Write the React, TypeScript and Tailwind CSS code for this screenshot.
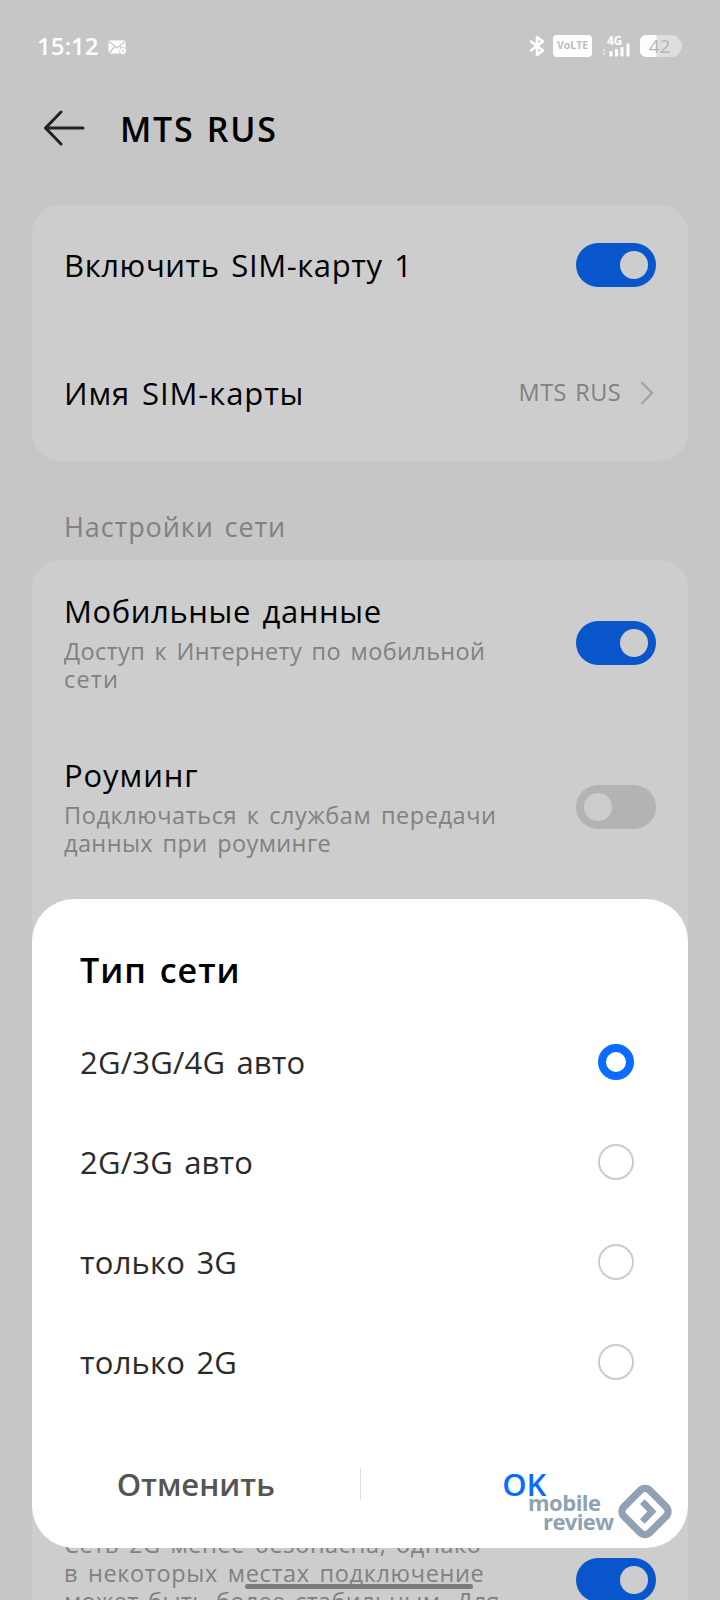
import React from 'react';
import clsx from 'clsx';

interface NetworkOption {
  id: string;
  label: string;
}

const networkOptions: NetworkOption[] = [
  { id: 'auto-4g', label: '2G/3G/4G авто' },
  { id: 'auto-3g', label: '2G/3G авто' },
  { id: 'only-3g', label: 'только 3G' },
  { id: 'only-2g', label: 'только 2G' },
];

const StatusBar = () => (
  <div className="flex h-[92px] items-center justify-between pl-[37px] pr-[38px] text-white">
    <div className="flex items-center gap-[10px]">
      <span className="text-[24px] leading-8 font-semibold">15:12</span>
      <svg width="19" height="15" viewBox="0 0 19 15" className="mt-[3px]">
        <rect x="0.5" y="0.5" width="17" height="13" rx="1.5" fill="#fff" />
        <path d="M1 1.500 9 8l8-6.500M1 13l5.500-6M12 6.500l2 2" stroke="#c6c6c6" strokeWidth="1.200" fill="none" />
        <circle cx="15" cy="11" r="3.500" fill="#fff" stroke="#c6c6c6" strokeWidth="0.800" />
        <circle cx="15" cy="11" r="1" fill="#c6c6c6" />
      </svg>
    </div>

    <div className="flex items-center">
      <svg width="16" height="22" viewBox="0 0 16 22" fill="none" stroke="#fff" strokeWidth="2.600" strokeLinejoin="round" strokeLinecap="round">
        <path d="M2 6.500 14 15.500 8 20V2l6 4.500L2 15.500" />
      </svg>
      <span className="ml-[8px] flex h-[22px] w-[39px] items-center justify-center rounded-[4px] bg-white text-[10.5px] font-bold text-[#bdbdbd]">
        VoLTE
      </span>
      <div className="ml-[9px] flex h-[22px] w-[30px] flex-col">
        <span className="pl-[6px] text-[12px] leading-[11px] font-bold tracking-[-0.3px]">4G</span>
        <svg width="30" height="14" viewBox="0 0 30 14" className="-mt-[3px]">
          <path d="M3 5.500 5.200 8.500H.8zM3 13 .8 10h4.400z" fill="#dcdcdc" />
          <g fill="#fff">
            <rect x="8.500" y="8" width="3" height="5.500" rx="1" />
            <rect x="14" y="6" width="3" height="7.500" rx="1" />
            <rect x="19.500" y="4" width="3" height="9.500" rx="1" />
            <rect x="25.500" y="0.500" width="3" height="13" rx="1" />
          </g>
        </svg>
      </div>
      <div className="relative ml-[9px] h-[22px] w-[42px]">
        <svg width="42" height="22" viewBox="0 0 42 22">
          <path d="M7 0h25q5 0 7 4.500 3 2 3 6.500t-3 6.500q-2 4.500-7 4.500H7q-7 0-7-7V7q0-7 7-7z" fill="#dedede" />
          <path d="M7 0h9.500v22H7q-7 0-7-7V7q0-7 7-7z" fill="#fff" />
        </svg>
        <span className="absolute inset-0 pr-[3px] text-center text-[19px] leading-[23px] text-[#b5b5b5]">42</span>
      </div>
    </div>
  </div>
);

const Toggle = ({ on, className }: { on?: boolean; className?: string }) => (
  <div
    className={clsx(
      'flex h-11 w-20 shrink-0 items-center rounded-full px-2',
      on ? 'justify-end bg-[#0855cc]' : 'justify-start bg-[#b3b3b3]',
      className,
    )}
  >
    <div className="size-7 rounded-full bg-[#cdcdcd]" />
  </div>
);

const Watermark = () => (
  <div className="absolute top-[1483px] left-[528px] flex text-[22px] leading-[19px] font-bold tracking-[-0.5px] text-[#8fa1b2]">
    <div className="w-[87px] pt-[10px]">
      <p>mobile</p>
      <p className="pl-[15px] tracking-[-0.6px]">review</p>
    </div>
    <svg width="56" height="56" viewBox="0 0 56 56" className="ml-[2px]">
      <rect x="9.700" y="10.200" width="36.600" height="36.600" rx="7" transform="rotate(45 28 28.500)" fill="none" stroke="#8fa1b2" strokeWidth="7.300" />
      <path d="m23 21 4.700-4.700 11.800 12.200-11.800 12.200L23 36.200l7.400-7.700z" fill="#8fa1b2" />
    </svg>
  </div>
);

const App = () => {
  return (
    <div className="relative h-[1600px] w-[720px] overflow-hidden bg-[#c6c6c6] font-['Open_Sans','Noto_Sans',sans-serif] text-black">
      <StatusBar />

      {/* Header */}
      <header className="flex h-[72px] items-center pl-[43px]">
        <svg width="42" height="36" viewBox="0 0 42 36" fill="none" stroke="#222" strokeWidth="3" strokeLinecap="round" strokeLinejoin="round">
          <path d="M40 18H3M18 2 2.500 18 18 34" />
        </svg>
        <h1 className="mt-[2px] ml-[35px] text-[34px] leading-10 font-semibold tracking-[1.7px] [word-spacing:2px]">MTS RUS</h1>
      </header>

      <main className="px-8 pt-[41px]">
        {/* SIM card */}
        <section className="rounded-[28px] bg-[#cdcdcd] px-8 text-[31px]">
          <div className="flex h-[120px] items-center justify-between">
            <span className="tracking-[0.6px] [word-spacing:3px]">Включить SIM-карту 1</span>
            <Toggle on />
          </div>
          <div className="flex h-[136px] items-center justify-between">
            <span className="tracking-[0.9px] [word-spacing:3px]">Имя SIM-карты</span>
            <div className="flex items-center text-[23.5px] text-[#818181]">
              <span className="tracking-[0.4px] [word-spacing:2px]">MTS RUS</span>
              <svg width="14" height="24" viewBox="0 0 14 24" fill="none" stroke="#a2a2a2" strokeWidth="2.200" className="mr-[2px] ml-[19px]">
                <path d="M1.500 1.200 12 12 1.500 22.800" />
              </svg>
            </div>
          </div>
        </section>

        <h2 className="h-[99px] px-8 pt-[48px] text-[27px] leading-9 tracking-[0.9px] text-[#818181] [word-spacing:3px]">
          Настройки сети
        </h2>

        {/* Network settings */}
        <section className="h-[1100px] rounded-t-[28px] bg-[#cdcdcd] px-8 pt-px">
          <div className="flex h-[164px] items-center justify-between">
            <div>
              <p className="mb-[8px] text-[31px] leading-9 tracking-[0.6px] [word-spacing:3px]">Мобильные данные</p>
              <p className="text-[23.5px] leading-[28.5px] tracking-[0.37px] text-[#818181] [word-spacing:3px]">
                Доступ к Интернету по мобильной
                <br />
                <span className="tracking-[1.2px]">сети</span>
              </p>
            </div>
            <Toggle on />
          </div>
          <div className="flex h-[164px] items-center justify-between">
            <div>
              <p className="mb-[8px] text-[31px] leading-9 tracking-[0.9px]">Роуминг</p>
              <p className="text-[23.5px] leading-[28.5px] tracking-[0.57px] text-[#818181] [word-spacing:3px]">
                Подключаться к службам передачи
                <br />
                <span className="tracking-[0.4px]">данных при роуминге</span>
              </p>
            </div>
            <Toggle />
          </div>
          <div className="mt-[641px] flex items-start justify-between">
            <p className="text-[23.5px] leading-[28.5px] tracking-[0.6px] whitespace-nowrap text-[#818181] [word-spacing:3px]">
              Сеть 2G менее безопасна, однако
              <br />
              <span className="tracking-[0.65px]">в некоторых местах подключение</span>
              <br />
              <span className="tracking-[0.35px]">может быть более стабильным. Для</span>
            </p>
            <Toggle on className="mt-[28px]" />
          </div>
        </section>
      </main>

      {/* Gesture bar */}
      <div className="absolute bottom-[11px] left-[245px] h-[5px] w-[228px] rounded-full bg-[#7b7b7b]" />

      {/* Network type dialog */}
      <div className="absolute top-[899px] left-8 h-[649px] w-[656px] rounded-[42px] bg-white pt-[51px]">
        <h3 className="mb-[22px] px-12 text-[34px] leading-10 font-semibold tracking-[1px] [word-spacing:3px]">Тип сети</h3>
        {networkOptions.map((option, index) => (
          <div key={option.id} className="flex h-[100px] items-center justify-between pr-[54px] pl-12">
            <span className="text-[31px] tracking-[0.2px] text-[#2b2b2b] [word-spacing:3px]">{option.label}</span>
            <span
              className={clsx(
                'size-9 rounded-full',
                index === 0 ? 'border-[8px] border-[#0a6cff]' : 'border-[2.5px] border-[#cbcbcb]',
              )}
            />
          </div>
        ))}
        <div className="mt-[56px] flex h-8 items-center text-[31px] font-semibold">
          <span className="flex-1 text-center text-[#555]">Отменить</span>
          <span className="h-8 w-px bg-[#dedede]" />
          <span className="flex-1 text-center text-[#0a6cff]">OK</span>
        </div>
      </div>

      <Watermark />
    </div>
  );
};

export default App;
